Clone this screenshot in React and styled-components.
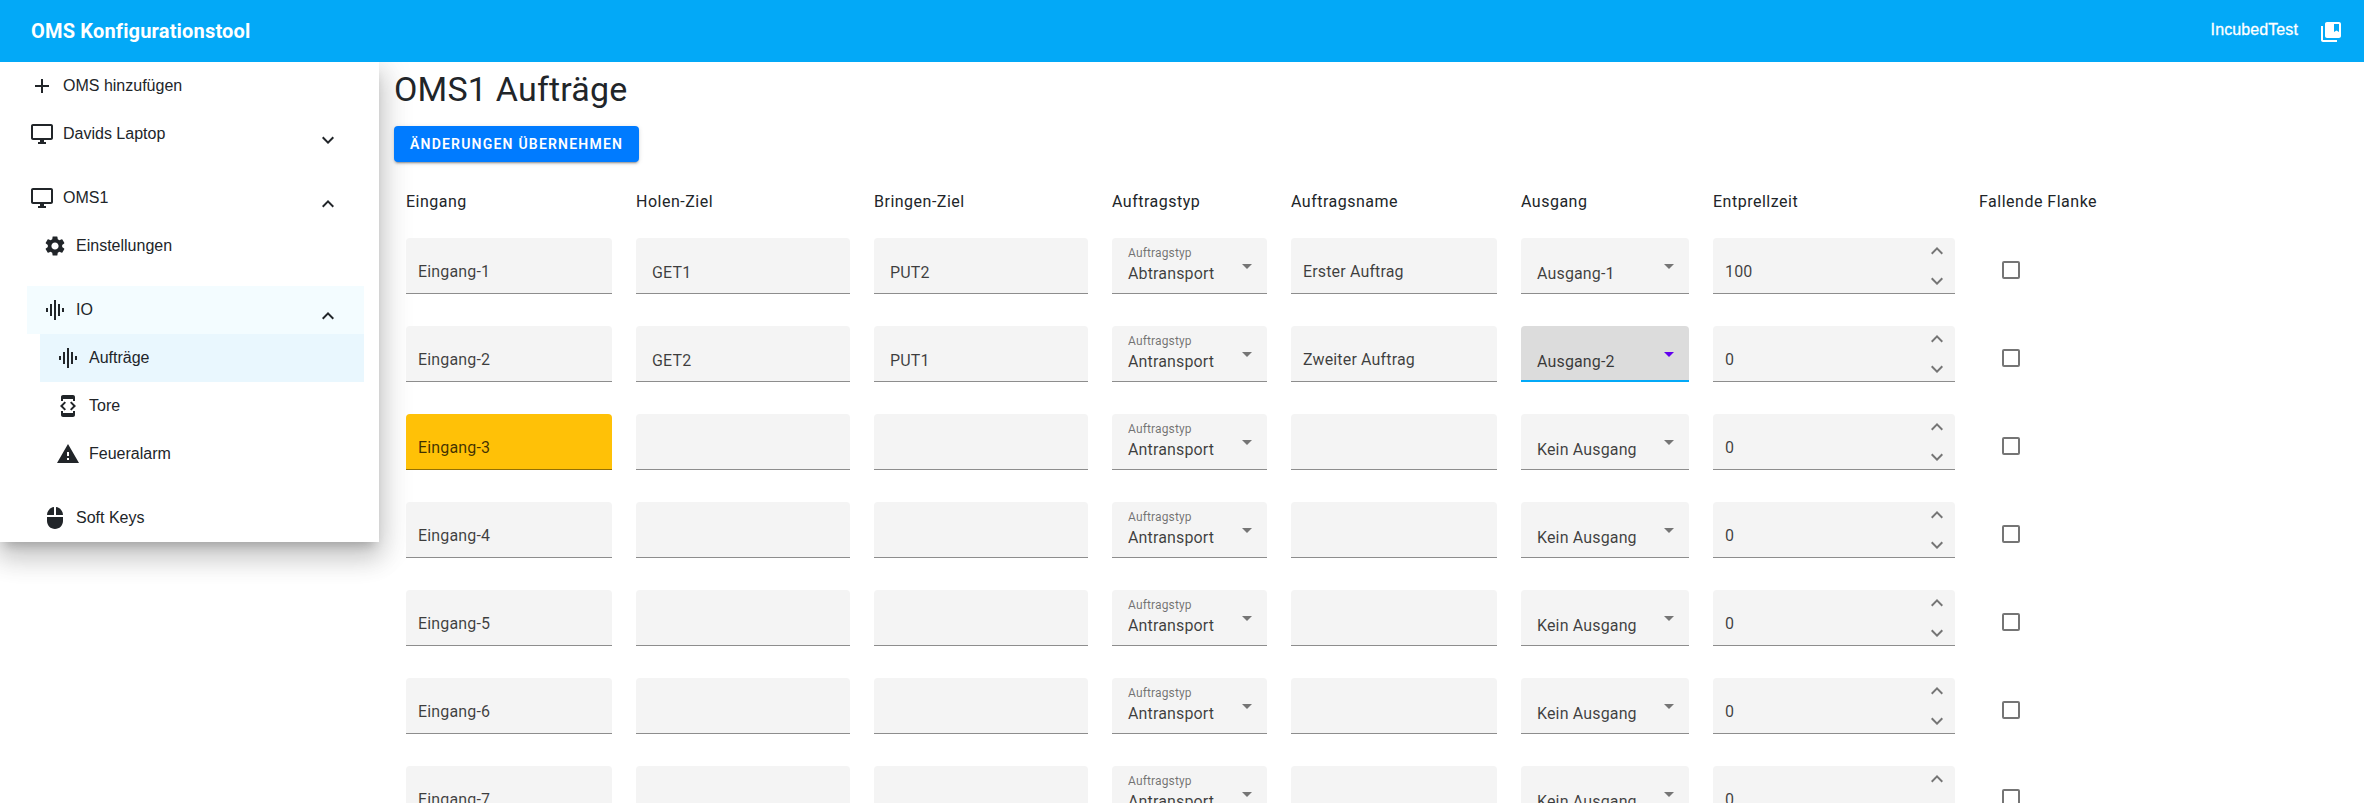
import React from "react";
import styled, { createGlobalStyle } from "styled-components";
import {
  MdAdd,
  MdCollectionsBookmark,
  MdDeveloperMode,
  MdExpandLess,
  MdExpandMore,
  MdGraphicEq,
  MdMouse,
  MdOutlineDesktopWindows,
  MdSettings,
  MdWarning,
} from "react-icons/md";

const GlobalStyle = createGlobalStyle`
  *, *::before, *::after { box-sizing: border-box; }
  html, body { margin: 0; height: 100%; overflow: hidden; }
  body { background: #fff; color: #212529; font-family: Roboto, sans-serif; font-size: 16px; }
  #root { height: 100%; }
`;

const Page = styled.div`
  display: flex;
  flex-direction: column;
  height: 100vh;
  overflow: hidden;
`;

const TopBar = styled.header`
  display: flex;
  flex: none;
  align-items: center;
  justify-content: space-between;
  height: 62px;
  padding: 0 21px 0 31px;
  background: #03a9f7;
  color: #fff;
  z-index: 2;
`;

const Brand = styled.div`
  font-size: 20px;
  font-weight: 700;
  line-height: 24px;
  letter-spacing: 0.18px;
  padding-bottom: 1px;
`;

const Account = styled.div`
  display: flex;
  align-items: center;
  gap: 21px;
  padding-top: 2px;
  font: 16px/24px "Liberation Sans", sans-serif;
  letter-spacing: 0.1px;
  -webkit-text-stroke: 0.3px #fff;

  span { padding-bottom: 5px; }
`;

const Body = styled.div`
  display: flex;
  flex: 1;
  align-items: flex-start;
  min-height: 0;
`;

const Sidebar = styled.nav`
  flex: none;
  width: 379px;
  padding-right: 15px;
  background: #fff;
  box-shadow: 0 8px 10px -5px rgba(0, 0, 0, 0.2), 0 16px 24px 2px rgba(0, 0, 0, 0.14),
    0 6px 30px 5px rgba(0, 0, 0, 0.12);
  font-family: "Liberation Sans", sans-serif;
`;

const NavRow = styled.div`
  display: flex;
  align-items: center;
  height: 48px;
  margin-top: ${(p) => (p.$spaced ? 16 : 0)}px;
  margin-left: ${(p) => 14 + p.$level * 13}px;
  padding: 0 24px 0 16px;
  background: ${(p) => p.$tint || "transparent"};
`;

const NavLabel = styled.span`
  flex: 1;
  padding-left: 9px;
  line-height: 24px;
`;

const NavChevron = styled.span`
  display: flex;
  padding-top: 12px;
`;

const Main = styled.main`
  display: flex;
  flex: 1;
  flex-direction: column;
  align-items: flex-start;
  min-width: 0;
  padding-left: 15px;
`;

const Title = styled.h1`
  margin: 7px 0 0;
  font-size: 34px;
  font-weight: 400;
  line-height: 40px;
  letter-spacing: 0.2px;
`;

const ApplyButton = styled.button`
  height: 36px;
  margin-top: 17px;
  padding: 0 16px;
  border: 0;
  border-radius: 4px;
  background: #007bff;
  color: #fff;
  font: 600 14px/36px Roboto, sans-serif;
  letter-spacing: 1.21px;
  text-transform: uppercase;
  white-space: nowrap;
  box-shadow: 0 3px 1px -2px rgba(0, 0, 0, 0.2), 0 2px 2px 0 rgba(0, 0, 0, 0.14),
    0 1px 5px 0 rgba(0, 0, 0, 0.12);
`;

const Table = styled.div`
  display: grid;
  grid-template-columns: 206px 214px 214px 155px 206px 168px 242px 140px;
  column-gap: 24px;
  row-gap: 32px;
  margin: 24px 0 0 12px;
`;

const HeadCell = styled.div`
  height: 20px;
  line-height: 32px;
  letter-spacing: 0.5px;
  white-space: nowrap;
`;

const Field = styled.div`
  display: flex;
  height: 56px;
  padding: 0 ${(p) => p.$pad || 12}px;
  border-bottom: ${(p) => (p.$focused ? "2px solid #03a9f7" : "1px solid #8d8d8d")};
  border-radius: 4px 4px 0 0;
  background: ${(p) => (p.$focused ? "#dcdcdc" : "#f4f4f4")};
  color: rgba(0, 0, 0, 0.75);
  letter-spacing: 0.15px;
  white-space: nowrap;
`;

const InputField = styled(Field)`
  background: ${(p) => (p.$alert ? "#ffc107" : "#f4f4f4")};
  border-bottom-color: ${(p) => (p.$alert ? "#947004" : "#8d8d8d")};
`;

const Value = styled.span`
  flex: 1;
  padding-top: ${(p) => p.$top}px;
  line-height: 24px;
`;

const SelectText = styled.div`
  display: flex;
  flex: 1;
  flex-direction: column;
`;

const FloatingLabel = styled.span`
  height: 24px;
  padding-top: 5px;
  color: rgba(0, 0, 0, 0.55);
  font-size: 12px;
  line-height: 20px;
`;

const SelectValue = styled.span`
  line-height: 24px;
`;

const Arrow = styled.span`
  width: 10px;
  height: 5px;
  margin: 26px -1px 0 0;
  background: ${(p) => (p.$focused ? "#6200ee" : "#757575")};
  clip-path: polygon(0 0, 100% 0, 50% 100%);
`;

const Spinner = styled.span`
  display: flex;
  flex-direction: column;
  gap: 6px;
  margin-right: -6px;
  padding-top: 1px;
  color: #757575;
`;

const CheckCell = styled.div`
  padding: 23px 0 0 23px;
`;

const Checkbox = styled.div`
  width: 18px;
  height: 18px;
  border: 2px solid #757575;
  border-radius: 2px;
`;

const NAV = [
  { label: "OMS hinzufügen", icon: MdAdd, level: 0 },
  { label: "Davids Laptop", icon: MdOutlineDesktopWindows, level: 0, chevron: MdExpandMore },
  { label: "OMS1", icon: MdOutlineDesktopWindows, level: 0, chevron: MdExpandLess, spaced: true },
  { label: "Einstellungen", icon: MdSettings, level: 1 },
  { label: "IO", icon: MdGraphicEq, level: 1, chevron: MdExpandLess, spaced: true, tint: "#f3fcff" },
  { label: "Aufträge", icon: MdGraphicEq, level: 2, tint: "#e9f7fe" },
  { label: "Tore", icon: MdDeveloperMode, level: 2 },
  { label: "Feueralarm", icon: MdWarning, level: 2 },
  { label: "Soft Keys", icon: MdMouse, level: 1, spaced: true },
];

const COLUMNS = [
  "Eingang",
  "Holen-Ziel",
  "Bringen-Ziel",
  "Auftragstyp",
  "Auftragsname",
  "Ausgang",
  "Entprellzeit",
  "Fallende Flanke",
];

const EMPTY = { get: "", put: "", type: "Antransport", name: "", out: "Kein Ausgang", time: "0" };

const ORDERS = [
  { ...EMPTY, get: "GET1", put: "PUT2", type: "Abtransport", name: "Erster Auftrag", out: "Ausgang-1", time: "100" },
  { ...EMPTY, get: "GET2", put: "PUT1", name: "Zweiter Auftrag", out: "Ausgang-2", focused: true },
  { ...EMPTY, alert: true },
  EMPTY,
  EMPTY,
  EMPTY,
  EMPTY,
];

function Select({ label, value, focused }) {
  return (
    <Field $pad={16} $focused={focused}>
      <SelectText>
        <FloatingLabel>{label}</FloatingLabel>
        <SelectValue>{value}</SelectValue>
      </SelectText>
      <Arrow $focused={focused} />
    </Field>
  );
}

function OrderRow({ order, index }) {
  return (
    <>
      <InputField $alert={order.alert}>
        <Value $top={22}>Eingang-{index + 1}</Value>
      </InputField>
      <Field $pad={16}>
        <Value $top={23}>{order.get}</Value>
      </Field>
      <Field $pad={16}>
        <Value $top={23}>{order.put}</Value>
      </Field>
      <Select label="Auftragstyp" value={order.type} />
      <Field>
        <Value $top={22}>{order.name}</Value>
      </Field>
      <Select value={order.out} focused={order.focused} />
      <Field>
        <Value $top={22}>{order.time}</Value>
        <Spinner>
          <MdExpandLess size={24} />
          <MdExpandMore size={24} />
        </Spinner>
      </Field>
      <CheckCell>
        <Checkbox />
      </CheckCell>
    </>
  );
}

export default function App() {
  return (
    <Page>
      <GlobalStyle />
      <TopBar>
        <Brand>OMS Konfigurationstool</Brand>
        <Account>
          <span>IncubedTest</span>
          <MdCollectionsBookmark size={24} />
        </Account>
      </TopBar>
      <Body>
        <Sidebar>
          {NAV.map(({ label, icon: Icon, level, chevron: Chevron, spaced, tint }) => (
            <NavRow key={label} $level={level} $spaced={spaced} $tint={tint}>
              <Icon size={24} />
              <NavLabel>{label}</NavLabel>
              {Chevron && (
                <NavChevron>
                  <Chevron size={24} />
                </NavChevron>
              )}
            </NavRow>
          ))}
        </Sidebar>
        <Main>
          <Title>OMS1 Aufträge</Title>
          <ApplyButton>Änderungen übernehmen</ApplyButton>
          <Table>
            {COLUMNS.map((name) => (
              <HeadCell key={name}>{name}</HeadCell>
            ))}
            {ORDERS.map((order, index) => (
              <OrderRow key={index} order={order} index={index} />
            ))}
          </Table>
        </Main>
      </Body>
    </Page>
  );
}
